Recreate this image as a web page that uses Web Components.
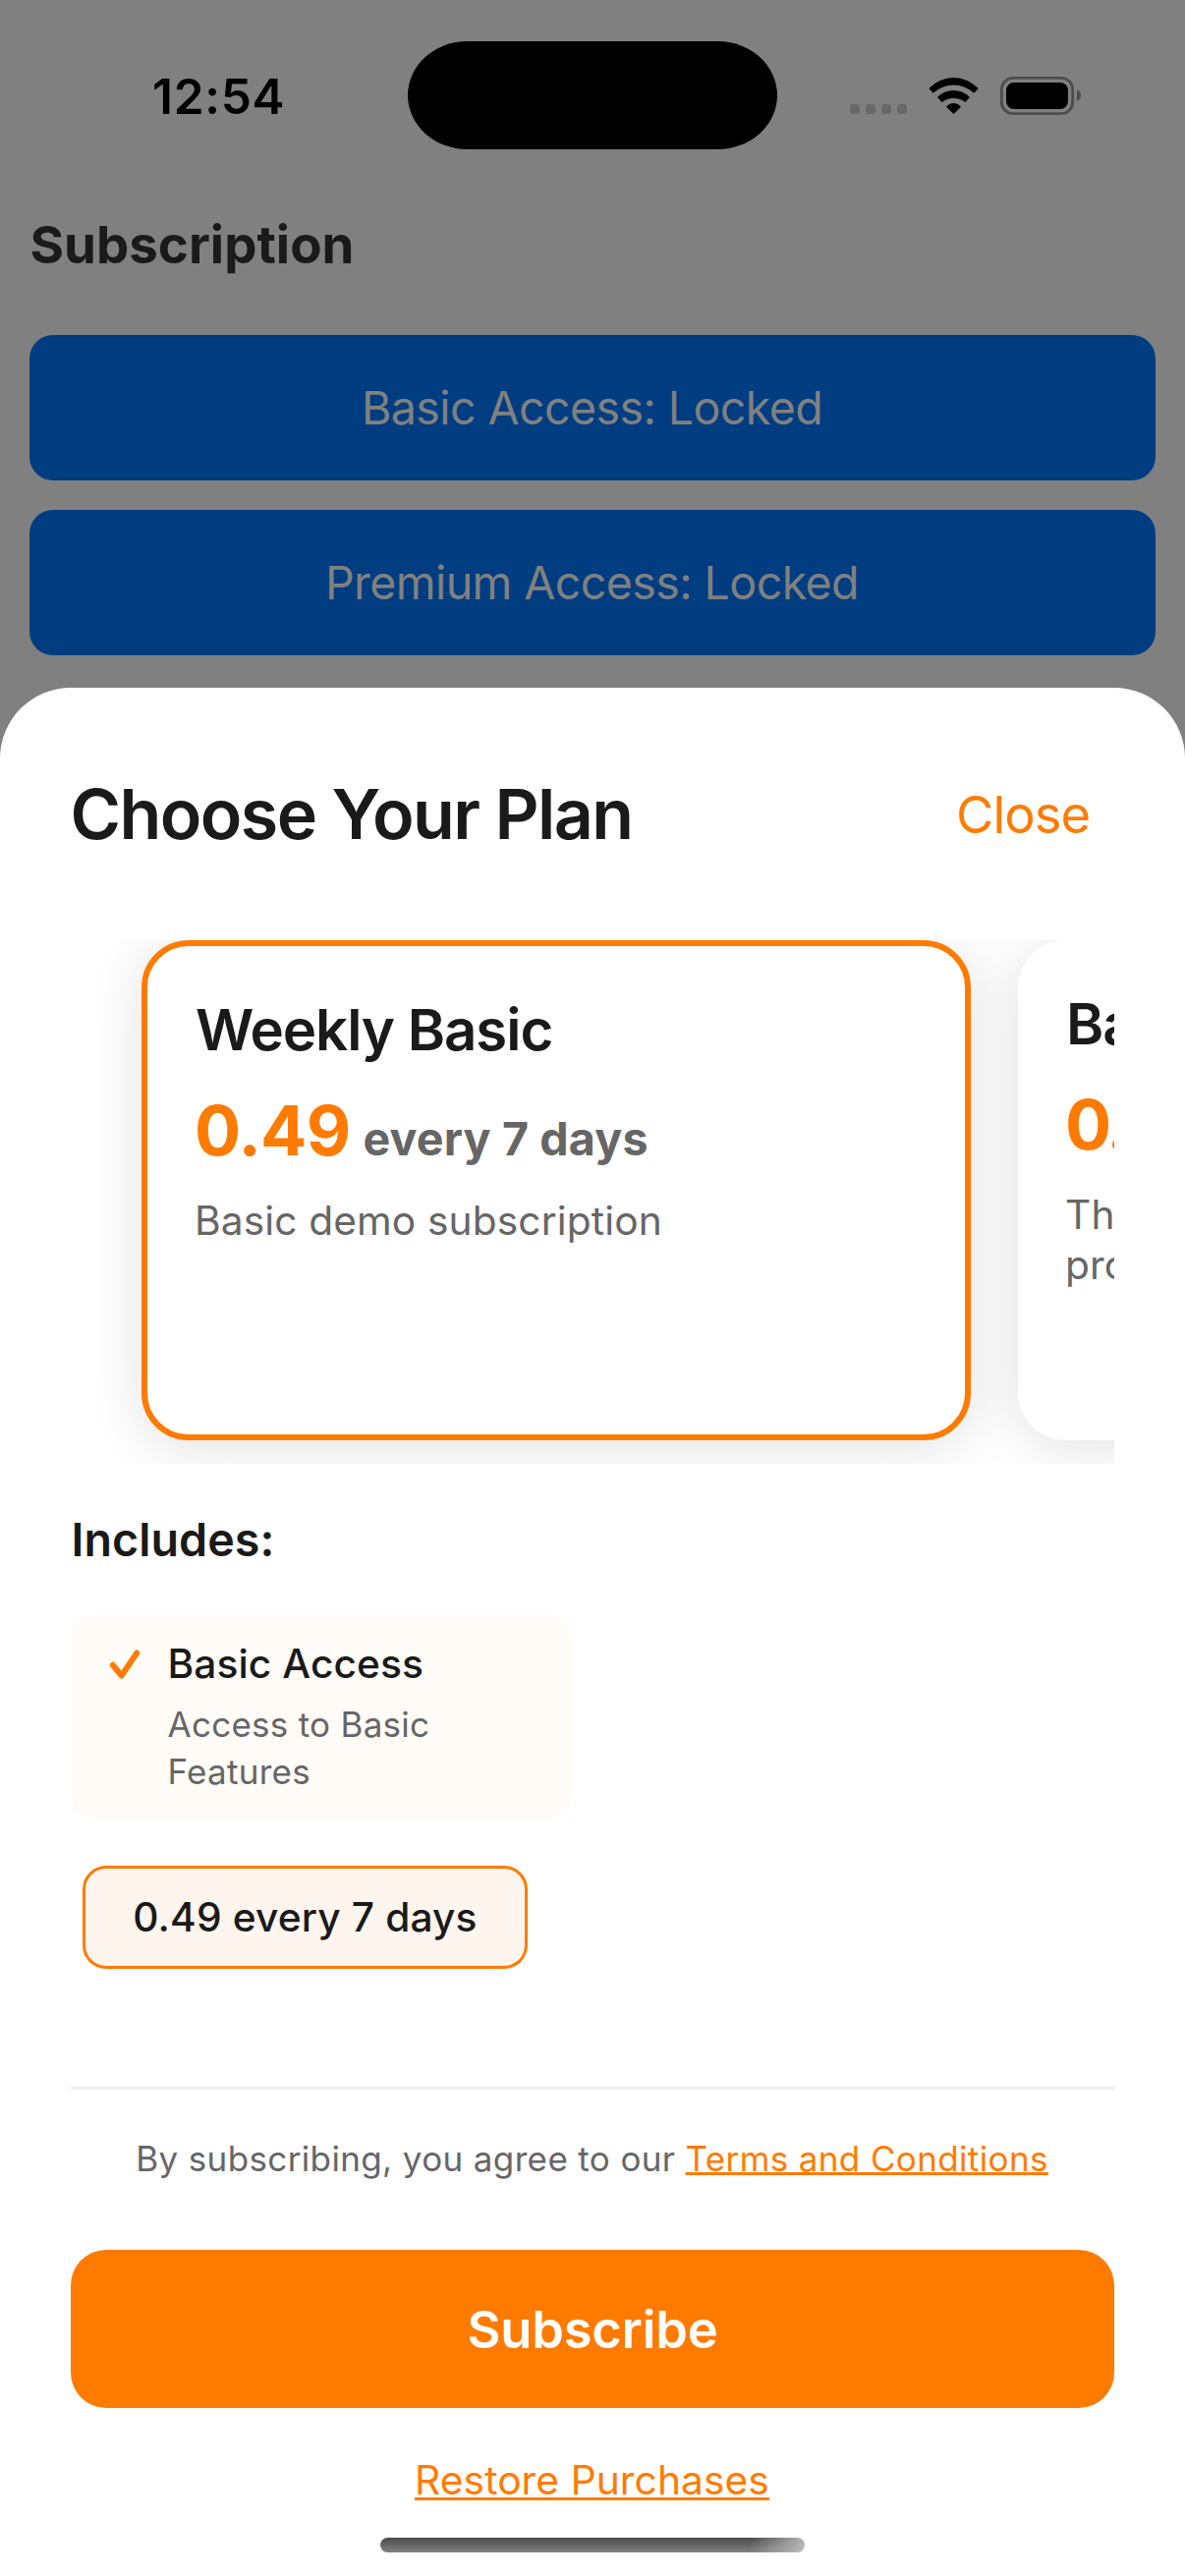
<!DOCTYPE html>
<html lang="en">
<head>
<meta charset="utf-8">
<title>Choose Your Plan</title>
<style>
html,body{margin:0;padding:0}
body{width:1206px;height:2622px;overflow:hidden;background:#808080;font-family:Inter,"Liberation Sans",sans-serif;color:#1a1a1a;--accent:#ff7b00;--muted:#666}
</style>
</head>
<body>
<app-screen></app-screen>
<script>
const define = (name, html) => {
  const tpl = document.createElement('template');
  tpl.innerHTML = html;
  customElements.define(name, class extends HTMLElement {
    constructor() {
      super();
      this.attachShadow({ mode: 'open' }).appendChild(tpl.content.cloneNode(true));
    }
  });
};

define('status-bar', `
<style>
:host{display:grid;grid-template-columns:415px 376px 1fr;height:153px;padding-top:41px;box-sizing:border-box}
.time{padding-left:155px;height:114px;font-weight:600;font-size:49.5px;line-height:114px;letter-spacing:.7px;color:#000}
.island{height:110.5px;margin-top:.7px;border-radius:61px/55.2px;background:#000}
svg{width:280px;height:80px;margin:19px 0 0 49px;display:block}
</style>
<div class="time">12:54</div>
<div class="island"></div>
<svg viewBox="0 0 840 240">
  <g fill="#686868"><rect x="75" y="138" width="30" height="30" rx="10"/><rect x="123" y="138" width="30" height="30" rx="10"/><rect x="171" y="138" width="30" height="30" rx="10"/><rect x="219" y="138" width="30" height="30" rx="10"/></g>
  <path d="M316 90A103 103 0 0 1 467 90L454 104A93 93 0 0 0 329 104Z"/>
  <path d="M342 117A69 69 0 0 1 441 117L427 132A60 60 0 0 0 356 132Z"/>
  <path d="M369 146A29 29 0 0 1 414 146L391.500 168Z"/>
  <rect x="538" y="58" width="217" height="109" rx="35" fill="none" stroke="#4d4d4d" stroke-width="8.500"/>
  <rect x="552" y="72" width="189" height="81" rx="24"/>
  <path d="M768 94Q780 99 780 112Q780 124 768 129Z" fill="#4d4d4d"/>
</svg>`);

define('access-button', `
<style>
:host{display:flex;align-items:center;justify-content:center;height:148px;padding-right:1px;box-sizing:border-box;border-radius:24px;background:#003d80;color:#808080;font-size:46.6px;letter-spacing:-.62px}
</style><slot></slot>`);

define('page-behind', `
<style>
:host{display:flex;flex-direction:column;height:700px;box-sizing:border-box}
main{display:flex;flex-direction:column;padding:56px 30px 0}
h1{margin:0 0 52px .5px;font-size:52.8px;line-height:80px;font-weight:700;letter-spacing:.02px;color:#1a1a1a}
access-button + access-button{margin-top:30px}
</style>
<status-bar></status-bar>
<main>
  <h1>Subscription</h1>
  <access-button>Basic Access: Locked</access-button>
  <access-button>Premium Access: Locked</access-button>
</main>`);

define('sheet-header', `
<style>
:host{display:flex;justify-content:space-between;align-items:center;height:88px;padding-right:25px}
h2{margin:0 0 0 -.5px;font-size:70px;font-weight:600;letter-spacing:-1.6px}
a{padding-top:1px;font-size:52.4px;letter-spacing:-.93px;color:var(--accent)}
</style>
<h2>Choose Your Plan</h2><a>Close</a>`);

define('plan-card', `
<style>
:host{display:block;flex:none;box-sizing:border-box;width:844px;height:509px;padding:48px;border-radius:48px;background:#fff;box-shadow:0 6px 56px rgba(0,0,0,.12);white-space:nowrap}
:host([selected]){border:6px solid var(--accent)}
.name{padding:1px 0 0 1px;font-size:58.2px;font-weight:600;line-height:73px;letter-spacing:-1.05px}
.price{display:flex;align-items:baseline;margin-top:23px;height:86px;line-height:86px;font-weight:700;color:var(--muted);font-size:46.6px;letter-spacing:.15px}
.price ::slotted([slot=amount]){font-size:70px;letter-spacing:-.72px;color:var(--accent);margin-right:13px}
.desc{margin-top:23px;font-size:40.7px;line-height:51px;letter-spacing:.12px;color:var(--muted)}
</style>
<div class="name"><slot name="name"></slot></div>
<div class="price"><slot name="amount"></slot><slot name="period"></slot></div>
<div class="desc"><slot></slot></div>`);

define('plan-carousel', `
<style>
:host{display:flex;gap:48px;height:533px;padding-left:72px;box-sizing:border-box;overflow:hidden;align-items:flex-start}
</style><slot></slot>`);

define('feature-item', `
<style>
:host{display:flex;gap:26px;box-sizing:border-box;width:510px;height:207px;padding:24px 36px;border-radius:24px;background:#fffcf7}
svg{flex:none;width:36px;height:51px}
.t{padding-left:.5px;font-size:40.7px;font-weight:500;line-height:51px;letter-spacing:.08px}
.d{margin-top:12px;padding-left:.5px;font-size:35px;line-height:48px;letter-spacing:.27px;color:var(--muted)}
</style>
<svg viewBox="0 0 36 51" fill="none" stroke="#ff7b00" stroke-width="6" stroke-linecap="round" stroke-linejoin="round"><path d="M6.900 26.800L15.700 37.500L31.300 14.400"/></svg>
<div><div class="t"><slot name="title"></slot></div><div class="d"><slot></slot></div></div>`);

define('price-pill', `
<style>
:host{display:flex;align-items:center;justify-content:center;box-sizing:border-box;width:453px;height:105px;border:3px solid var(--accent);border-radius:24px;background:#fff5ef;font-size:40.7px;font-weight:500;letter-spacing:.14px}
</style><slot></slot>`);

define('legal-line', `
<style>
:host{display:block;padding-right:1px;text-align:center;font-size:35px;line-height:48px;letter-spacing:.37px;color:var(--muted);white-space:nowrap}
a{color:var(--accent);text-decoration:underline;text-decoration-thickness:3px;text-underline-offset:1px;text-decoration-skip-ink:none}
</style>By subscribing, you agree to our <a>Terms and Conditions</a>`);

define('primary-button', `
<style>
:host{display:flex;align-items:center;justify-content:center;height:161px;border-radius:36px;background:var(--accent);color:#fff;font-size:52.4px;font-weight:600;letter-spacing:-.2px}
</style><slot></slot>`);

define('restore-link', `
<style>
:host{display:block;padding-right:1px;text-align:center;font-size:40.7px;line-height:51px;letter-spacing:.08px;color:var(--accent);text-decoration:underline;text-decoration-thickness:3px;text-underline-offset:3px;text-decoration-skip-ink:none}
</style><slot></slot>`);

define('home-indicator', `
<style>
:host{display:block;width:432px;height:15px;border-radius:8px;background:linear-gradient(100deg,rgba(190,190,190,0) 87%,rgba(190,190,190,.95) 100%),linear-gradient(#4b4b4b,#7f7f7f)}
</style>`);

define('plan-sheet', `
<style>
:host{display:flex;flex-direction:column;box-sizing:border-box;height:1922px;padding:84px 72px 0;border-radius:72px 72px 0 0;background:#fff}
plan-carousel{margin-top:85px}
h3{margin:47px 0 0 .5px;font-size:46.6px;font-weight:600;line-height:61px;letter-spacing:.06px}
feature-item{margin-top:46px}
price-pill{margin:48px 0 0 12px}
hr{margin:120px 0 0;border:0;height:3px;width:100%;background:#eee}
legal-line{margin-top:46px}
primary-button{margin-top:69px}
restore-link{margin-top:48px}
home-indicator{align-self:center;margin-top:33px}
</style>
<sheet-header></sheet-header>
<plan-carousel>
  <plan-card selected><span slot="name">Weekly Basic</span><span slot="amount">0.49</span><span slot="period">every 7 days</span>Basic demo subscription</plan-card>
  <plan-card><span slot="name">Ba</span><span slot="amount" style="letter-spacing:-3px">0.</span>Th<br>pro</plan-card>
</plan-carousel>
<h3>Includes:</h3>
<feature-item><span slot="title">Basic Access</span>Access to Basic<br>Features</feature-item>
<price-pill>0.49 every 7 days</price-pill>
<hr>
<legal-line></legal-line>
<primary-button>Subscribe</primary-button>
<restore-link>Restore Purchases</restore-link>
<home-indicator></home-indicator>`);

define('app-screen', `
<style>:host{display:flex;flex-direction:column;width:1206px;height:2622px}</style>
<page-behind></page-behind>
<plan-sheet></plan-sheet>`);
</script>
</body>
</html>
